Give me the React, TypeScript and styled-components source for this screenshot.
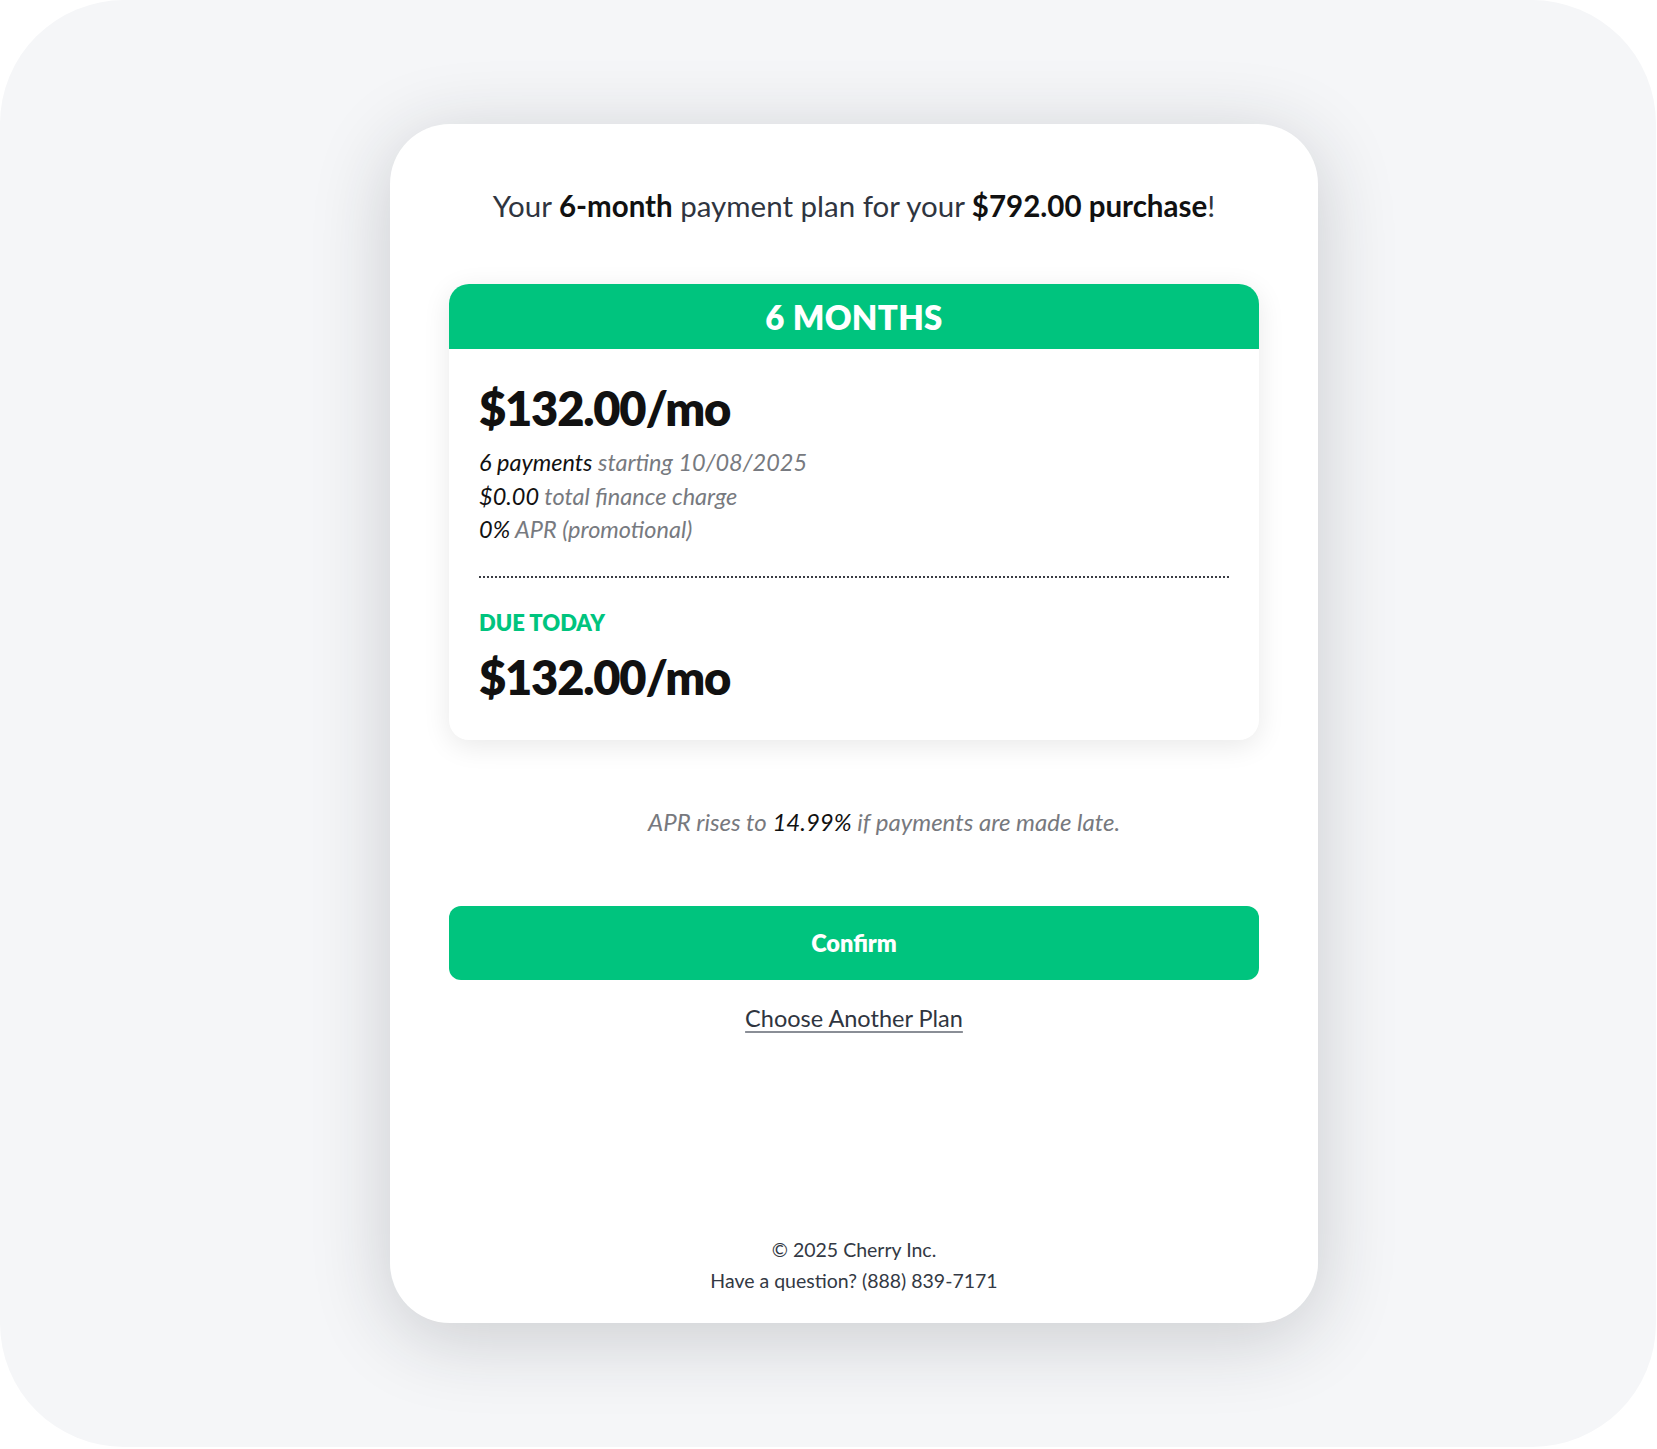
import styled, { createGlobalStyle } from 'styled-components';

const GREEN = '#00c47e';

const GlobalStyle = createGlobalStyle`
  html, body {
    margin: 0;
    padding: 0;
    background: #ffffff;
  }
  body {
    font-family: Lato, 'Open Sans', Arial, sans-serif;
  }
`;

const Frame = styled.div`
  width: 1656px;
  height: 1447px;
  box-sizing: border-box;
  padding: 124px 0 0 390px;
  background: #f5f6f8;
  border-radius: 124px;
`;

const Sheet = styled.main`
  width: 928px;
  height: 1199px;
  box-sizing: border-box;
  padding: 62px 59px 27px;
  display: flex;
  flex-direction: column;
  background: #fff;
  border-radius: 60px;
  box-shadow: 0 14px 80px rgba(30, 35, 45, 0.2);
`;

const Heading = styled.h1`
  margin: 0;
  text-align: center;
  font-size: 29.5px;
  line-height: 39px;
  font-weight: 400;
  color: #2f3540;

  & b {
    font-weight: 700;
    color: #111;
  }
`;

const Plan = styled.section`
  margin-top: 59px;
  border-radius: 20px;
  overflow: hidden;
  background: #fff;
  box-shadow: 0 6px 28px rgba(0, 0, 0, 0.09);
`;

const PlanHeader = styled.div`
  height: 65px;
  display: flex;
  align-items: center;
  justify-content: center;
  background: ${GREEN};
  color: #fff;
  font-size: 33px;
  font-weight: 800;
  letter-spacing: 0.3px;
`;

const PlanBody = styled.div`
  padding: 30px 30px 34px;
`;

const Price = styled.div<{ $gap?: number }>`
  margin-top: ${(p) => p.$gap ?? 0}px;
  font-size: 47px;
  line-height: 58px;
  font-weight: 800;
  color: #111;
  letter-spacing: -1.2px;
`;

const Details = styled.div`
  margin-top: 9px;
`;

const Line = styled.div`
  font-size: 23.5px;
  line-height: 33.5px;
  font-style: italic;
  color: #777a80;

  & b {
    font-weight: 400;
    color: #111;
  }
`;

const Divider = styled.hr`
  margin: 29px 0 0;
  border: none;
  border-top: 2px dotted #3a3d44;
  height: 0;
`;

const DueLabel = styled.div`
  margin-top: 32px;
  font-size: 22px;
  line-height: 26px;
  font-weight: 800;
  color: ${GREEN};
`;

const Note = styled.p`
  margin: 67px 0 0;
  padding-left: 60px;
  text-align: center;
  font-size: 24px;
  line-height: 30px;
  font-style: italic;
  color: #77797e;

  & b {
    font-weight: 400;
    color: #111;
  }
`;

const ConfirmButton = styled.button`
  margin-top: 69px;
  height: 74px;
  width: 100%;
  border: none;
  border-radius: 12px;
  background: ${GREEN};
  color: #fff;
  font-family: inherit;
  font-size: 23.5px;
  font-weight: 800;
  cursor: pointer;
`;

const TextLink = styled.a`
  margin-top: 25px;
  align-self: center;
  font-size: 23.5px;
  line-height: 26px;
  color: #2f3540;
  text-decoration: underline;
  text-decoration-color: #8a8e96;
  text-underline-offset: 4px;
  cursor: pointer;
`;

const Footer = styled.footer`
  margin-top: auto;
  text-align: center;
  font-size: 19.5px;
  line-height: 31px;
  color: #333944;
`;

export default function App() {
  return (
    <>
      <GlobalStyle />
      <Frame>
        <Sheet>
          <Heading>
            Your <b>6-month</b> payment plan for your <b>$792.00 purchase</b>!
          </Heading>

          <Plan>
            <PlanHeader>6 MONTHS</PlanHeader>
            <PlanBody>
              <Price>$132.00/mo</Price>
              <Details>
                <Line>
                  <b>6 payments</b> starting 10/08/2025
                </Line>
                <Line>
                  <b>$0.00</b> total finance charge
                </Line>
                <Line>
                  <b>0%</b> APR (promotional)
                </Line>
              </Details>
              <Divider />
              <DueLabel>DUE TODAY</DueLabel>
              <Price $gap={12}>$132.00/mo</Price>
            </PlanBody>
          </Plan>

          <Note>
            APR rises to <b>14.99%</b> if payments are made late.
          </Note>

          <ConfirmButton>Confirm</ConfirmButton>
          <TextLink>Choose Another Plan</TextLink>

          <Footer>
            <div>© 2025 Cherry Inc.</div>
            <div>Have a question? (888) 839-7171</div>
          </Footer>
        </Sheet>
      </Frame>
    </>
  );
}
